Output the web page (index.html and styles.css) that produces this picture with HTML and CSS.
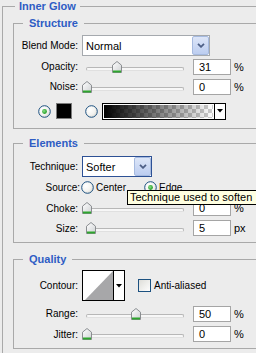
FILE: index.html
```html
<!DOCTYPE html>
<html>
<head>
<meta charset="utf-8">
<link rel="stylesheet" href="styles.css">
</head>
<body>
<svg class="defs" width="0" height="0">
  <defs>
    <linearGradient id="thumbFill" x1="0" y1="0" x2="1" y2="1">
      <stop offset="0" stop-color="#ffffff"/>
      <stop offset="1" stop-color="#cfd2d4"/>
    </linearGradient>
    <radialGradient id="radioFill" cx="0.35" cy="0.35" r="0.75">
      <stop offset="0" stop-color="#ffffff"/>
      <stop offset="0.6" stop-color="#f3f3f0"/>
      <stop offset="1" stop-color="#d6d5cf"/>
    </radialGradient>
    <radialGradient id="dotFill" cx="0.4" cy="0.4" r="0.6">
      <stop offset="0" stop-color="#8be08b"/>
      <stop offset="1" stop-color="#1f9c1f"/>
    </radialGradient>
    <linearGradient id="boxFill" x1="0" y1="0" x2="1" y2="1">
      <stop offset="0" stop-color="#dcdcd7"/>
      <stop offset="1" stop-color="#ffffff"/>
    </linearGradient>
  </defs>
</svg>
<div class="panel">
  <fieldset class="group outer">
    <legend>Inner Glow</legend>

    <fieldset class="group inner structure">
      <legend>Structure</legend>
      <div class="row r21">
        <span class="label">Blend Mode:</span>
        <div class="select wide">
          <span class="select-text">Normal</span>
          <span class="select-btn"><svg width="8" height="5" viewBox="0 0 8 5"><path d="M1 0.8 L4 3.8 L7 0.8" fill="none" stroke="#4d5f86" stroke-width="1.8"/></svg></span>
        </div>
      </div>
      <div class="row r21">
        <span class="label">Opacity:</span>
        <div class="slider">
          <svg class="thumb" style="left:30px" width="10" height="12" viewBox="0 0 10 12"><path d="M0.5 4.2 L5 0.5 L9.5 4.2 V11.5 H0.5 Z" fill="url(#thumbFill)" stroke="#8a8d90"/><rect x="1" y="9.5" width="8" height="2" fill="#2ea52e"/></svg>
        </div>
        <div class="num">31</div><span class="unit">%</span>
      </div>
      <div class="row r19">
        <span class="label">Noise:</span>
        <div class="slider">
          <svg class="thumb" style="left:0px" width="10" height="12" viewBox="0 0 10 12"><path d="M0.5 4.2 L5 0.5 L9.5 4.2 V11.5 H0.5 Z" fill="url(#thumbFill)" stroke="#8a8d90"/><rect x="1" y="9.5" width="8" height="2" fill="#2ea52e"/></svg>
        </div>
        <div class="num">0</div><span class="unit">%</span>
      </div>
      <div class="row colors">
        <svg class="radio" width="13" height="13" viewBox="0 0 13 13"><circle cx="6.5" cy="6.5" r="5.8" fill="url(#radioFill)" stroke="#1c5180"/><circle cx="6.5" cy="6.5" r="2.4" fill="url(#dotFill)"/></svg>
        <span class="swatch"></span>
        <svg class="radio gap-radio" width="13" height="13" viewBox="0 0 13 13"><circle cx="6.5" cy="6.5" r="5.8" fill="url(#radioFill)" stroke="#1c5180"/></svg>
        <div class="gradient">
          <span class="gradient-fill"></span>
          <span class="drop-arrow"><svg width="6" height="4" viewBox="0 0 6 4"><path d="M0 0 H6 L3 3.5 Z" fill="#000"/></svg></span>
        </div>
      </div>
    </fieldset>

    <fieldset class="group inner elements">
      <legend>Elements</legend>
      <div class="row r21">
        <span class="label">Technique:</span>
        <div class="select narrow">
          <span class="select-text">Softer</span>
          <span class="select-btn"><svg width="8" height="5" viewBox="0 0 8 5"><path d="M1 0.8 L4 3.8 L7 0.8" fill="none" stroke="#4d5f86" stroke-width="1.8"/></svg></span>
        </div>
      </div>
      <div class="row r21">
        <span class="label label-src">Source:</span>
        <svg class="radio" width="13" height="13" viewBox="0 0 13 13"><circle cx="6.5" cy="6.5" r="5.8" fill="url(#radioFill)" stroke="#1c5180"/></svg>
        <span class="opt">Center</span>
        <svg class="radio gap-edge" width="13" height="13" viewBox="0 0 13 13"><circle cx="6.5" cy="6.5" r="5.8" fill="url(#radioFill)" stroke="#1c5180"/><circle cx="6.5" cy="6.5" r="2.4" fill="url(#dotFill)"/></svg>
        <span class="opt">Edge</span>
      </div>
      <div class="row r20">
        <span class="label">Choke:</span>
        <div class="slider">
          <svg class="thumb" style="left:0px" width="10" height="12" viewBox="0 0 10 12"><path d="M0.5 4.2 L5 0.5 L9.5 4.2 V11.5 H0.5 Z" fill="url(#thumbFill)" stroke="#8a8d90"/><rect x="1" y="9.5" width="8" height="2" fill="#2ea52e"/></svg>
        </div>
        <div class="num">0</div><span class="unit">%</span>
      </div>
      <div class="row r20">
        <span class="label">Size:</span>
        <div class="slider">
          <svg class="thumb" style="left:4px" width="10" height="12" viewBox="0 0 10 12"><path d="M0.5 4.2 L5 0.5 L9.5 4.2 V11.5 H0.5 Z" fill="url(#thumbFill)" stroke="#8a8d90"/><rect x="1" y="9.5" width="8" height="2" fill="#2ea52e"/></svg>
        </div>
        <div class="num">5</div><span class="unit">px</span>
      </div>
    </fieldset>

    <fieldset class="group inner quality">
      <legend>Quality</legend>
      <div class="row r31">
        <span class="label">Contour:</span>
        <div class="contour">
          <svg class="contour-preview" width="30" height="29" viewBox="0 0 30 29"><rect width="30" height="29" fill="#fff"/><polygon points="2,29 30,0 30,29" fill="#a7a7a9"/></svg>
          <span class="drop-arrow"><svg width="6" height="4" viewBox="0 0 6 4"><path d="M0 0 H6 L3 3.5 Z" fill="#000"/></svg></span>
        </div>
        <svg class="check" width="13" height="13" viewBox="0 0 13 13"><rect x="0.5" y="0.5" width="12" height="12" fill="url(#boxFill)" stroke="#1c5180"/></svg>
        <span class="opt">Anti-aliased</span>
      </div>
      <div class="row r21 range-row">
        <span class="label">Range:</span>
        <div class="slider">
          <svg class="thumb" style="left:49px" width="10" height="12" viewBox="0 0 10 12"><path d="M0.5 4.2 L5 0.5 L9.5 4.2 V11.5 H0.5 Z" fill="url(#thumbFill)" stroke="#8a8d90"/><rect x="1" y="9.5" width="8" height="2" fill="#2ea52e"/></svg>
        </div>
        <div class="num">50</div><span class="unit">%</span>
      </div>
      <div class="row r20">
        <span class="label">Jitter:</span>
        <div class="slider">
          <svg class="thumb" style="left:0px" width="10" height="12" viewBox="0 0 10 12"><path d="M0.5 4.2 L5 0.5 L9.5 4.2 V11.5 H0.5 Z" fill="url(#thumbFill)" stroke="#8a8d90"/><rect x="1" y="9.5" width="8" height="2" fill="#2ea52e"/></svg>
        </div>
        <div class="num">0</div><span class="unit">%</span>
      </div>
    </fieldset>
  </fieldset>

  <div class="tooltip">Technique used to soften</div>
</div>
</body>
</html>
```
FILE: styles.css
```css
html, body {
  margin: 0;
  padding: 0;
  overflow: hidden;
  background: #ececec;
}
body {
  font-family: "Liberation Sans", Arial, sans-serif;
  font-size: 10px;
  color: #000;
}
.defs {
  display: block;
  width: 0;
  height: 0;
}
.panel {
  position: relative;
  width: 290px;
}
.group {
  border: 1px solid #a9a9a9;
  margin: 0;
  padding: 0;
  min-width: 0;
}
.group > legend {
  font-weight: bold;
  font-size: 11px;
  line-height: 13px;
  color: #2e5cc4;
  padding: 0 6px;
}
.outer {
  margin-left: 2px;
  padding: 0 0 12px 10px;
}
.outer > legend {
  margin-left: 2px;
  padding: 0 4px;
}
.inner > legend {
  margin-left: 9px;
}
.structure {
  margin-top: 4px;
  padding: 5px 0 8px;
}
.elements {
  margin-top: 8px;
  padding: 6px 0 4px;
}
.quality {
  margin-top: 10px;
  padding: 4px 0 4px;
}
.row {
  display: flex;
  align-items: center;
}
.r18 { height: 18px; }
.r19 { height: 19px; }
.r20 { height: 20px; }
.r21 { height: 21px; }
.r31 { height: 31px; }
.range-row { margin-top: 2px; }
.label {
  flex: none;
  width: 64px;
  margin-right: 4px;
  text-align: right;
  white-space: nowrap;
}
.label-src {
  width: 66px;
  margin-right: 1px;
}
.select {
  flex: none;
  display: flex;
  align-items: center;
  box-sizing: border-box;
  height: 21px;
  border: 1px solid #a5a9ae;
  background: #fff;
}
.select.wide { width: 128px; }
.select.narrow { width: 70px; border-color: #2d5195; }
.select-text {
  flex: 1;
  padding-left: 3px;
  font-size: 11px;
}
.select-btn {
  flex: none;
  box-sizing: border-box;
  width: 17px;
  height: 19px;
  border: 1px solid #a6badf;
  border-radius: 2px;
  background: linear-gradient(#dde6f8, #bccdf0);
  display: flex;
  align-items: center;
  justify-content: center;
}
.slider {
  flex: none;
  position: relative;
  width: 107px;
  height: 12px;
  margin-right: 4px;
}
.slider::before {
  content: "";
  position: absolute;
  left: 4px;
  top: 6px;
  width: 98px;
  height: 4px;
  box-sizing: border-box;
  border: 1px solid #b7b7b7;
  border-bottom-color: #e0e0e0;
  border-radius: 2px;
  background: #f7f7f7;
}
.thumb {
  position: absolute;
  top: 0;
}
.num {
  flex: none;
  box-sizing: border-box;
  width: 38px;
  height: 16px;
  border: 1px solid #a5a5a5;
  background: #fff;
  font-size: 11px;
  line-height: 14px;
  padding-left: 5px;
}
.unit {
  margin-left: 3px;
  font-size: 11px;
}
.colors {
  height: 18px;
  margin-top: 6px;
  padding-left: 24px;
}
.radio, .check {
  flex: none;
  display: block;
}
.swatch {
  flex: none;
  box-sizing: border-box;
  width: 16px;
  height: 16px;
  margin-left: 5px;
  border: 1px solid #7b7b7b;
  background: #000;
}
.gap-radio { margin-left: 13px; }
.gradient {
  flex: none;
  display: flex;
  box-sizing: border-box;
  width: 124px;
  height: 17px;
  margin-left: 4px;
  border: 1px solid #000;
  background: #fff;
}
.gradient-fill {
  flex: 1;
  margin: 1px;
  background:
    linear-gradient(to right, #000, rgba(0, 0, 0, 0)),
    repeating-conic-gradient(#cccccc 0 25%, #ffffff 0 50%) 0 0 / 8px 8px;
}
.drop-arrow {
  flex: none;
  width: 10px;
  border-left: 1px solid #000;
  background: #fff;
  display: flex;
  align-items: center;
  justify-content: center;
}
.opt {
  margin-left: 2px;
  white-space: nowrap;
}
.gap-edge { margin-left: 18px; }
.contour {
  flex: none;
  display: flex;
  box-sizing: border-box;
  width: 43px;
  height: 31px;
  border: 1px solid #000;
  background: #fff;
}
.contour-preview {
  display: block;
  flex: none;
}
.check {
  margin-left: 13px;
}
.check + .opt {
  margin-left: 3px;
}
.tooltip {
  position: absolute;
  left: 127px;
  top: 190px;
  height: 13px;
  line-height: 13px;
  padding: 0 6px 0 2px;
  border: 1px solid #000;
  background: #ffffe1;
  font-size: 11px;
  white-space: nowrap;
}
```
